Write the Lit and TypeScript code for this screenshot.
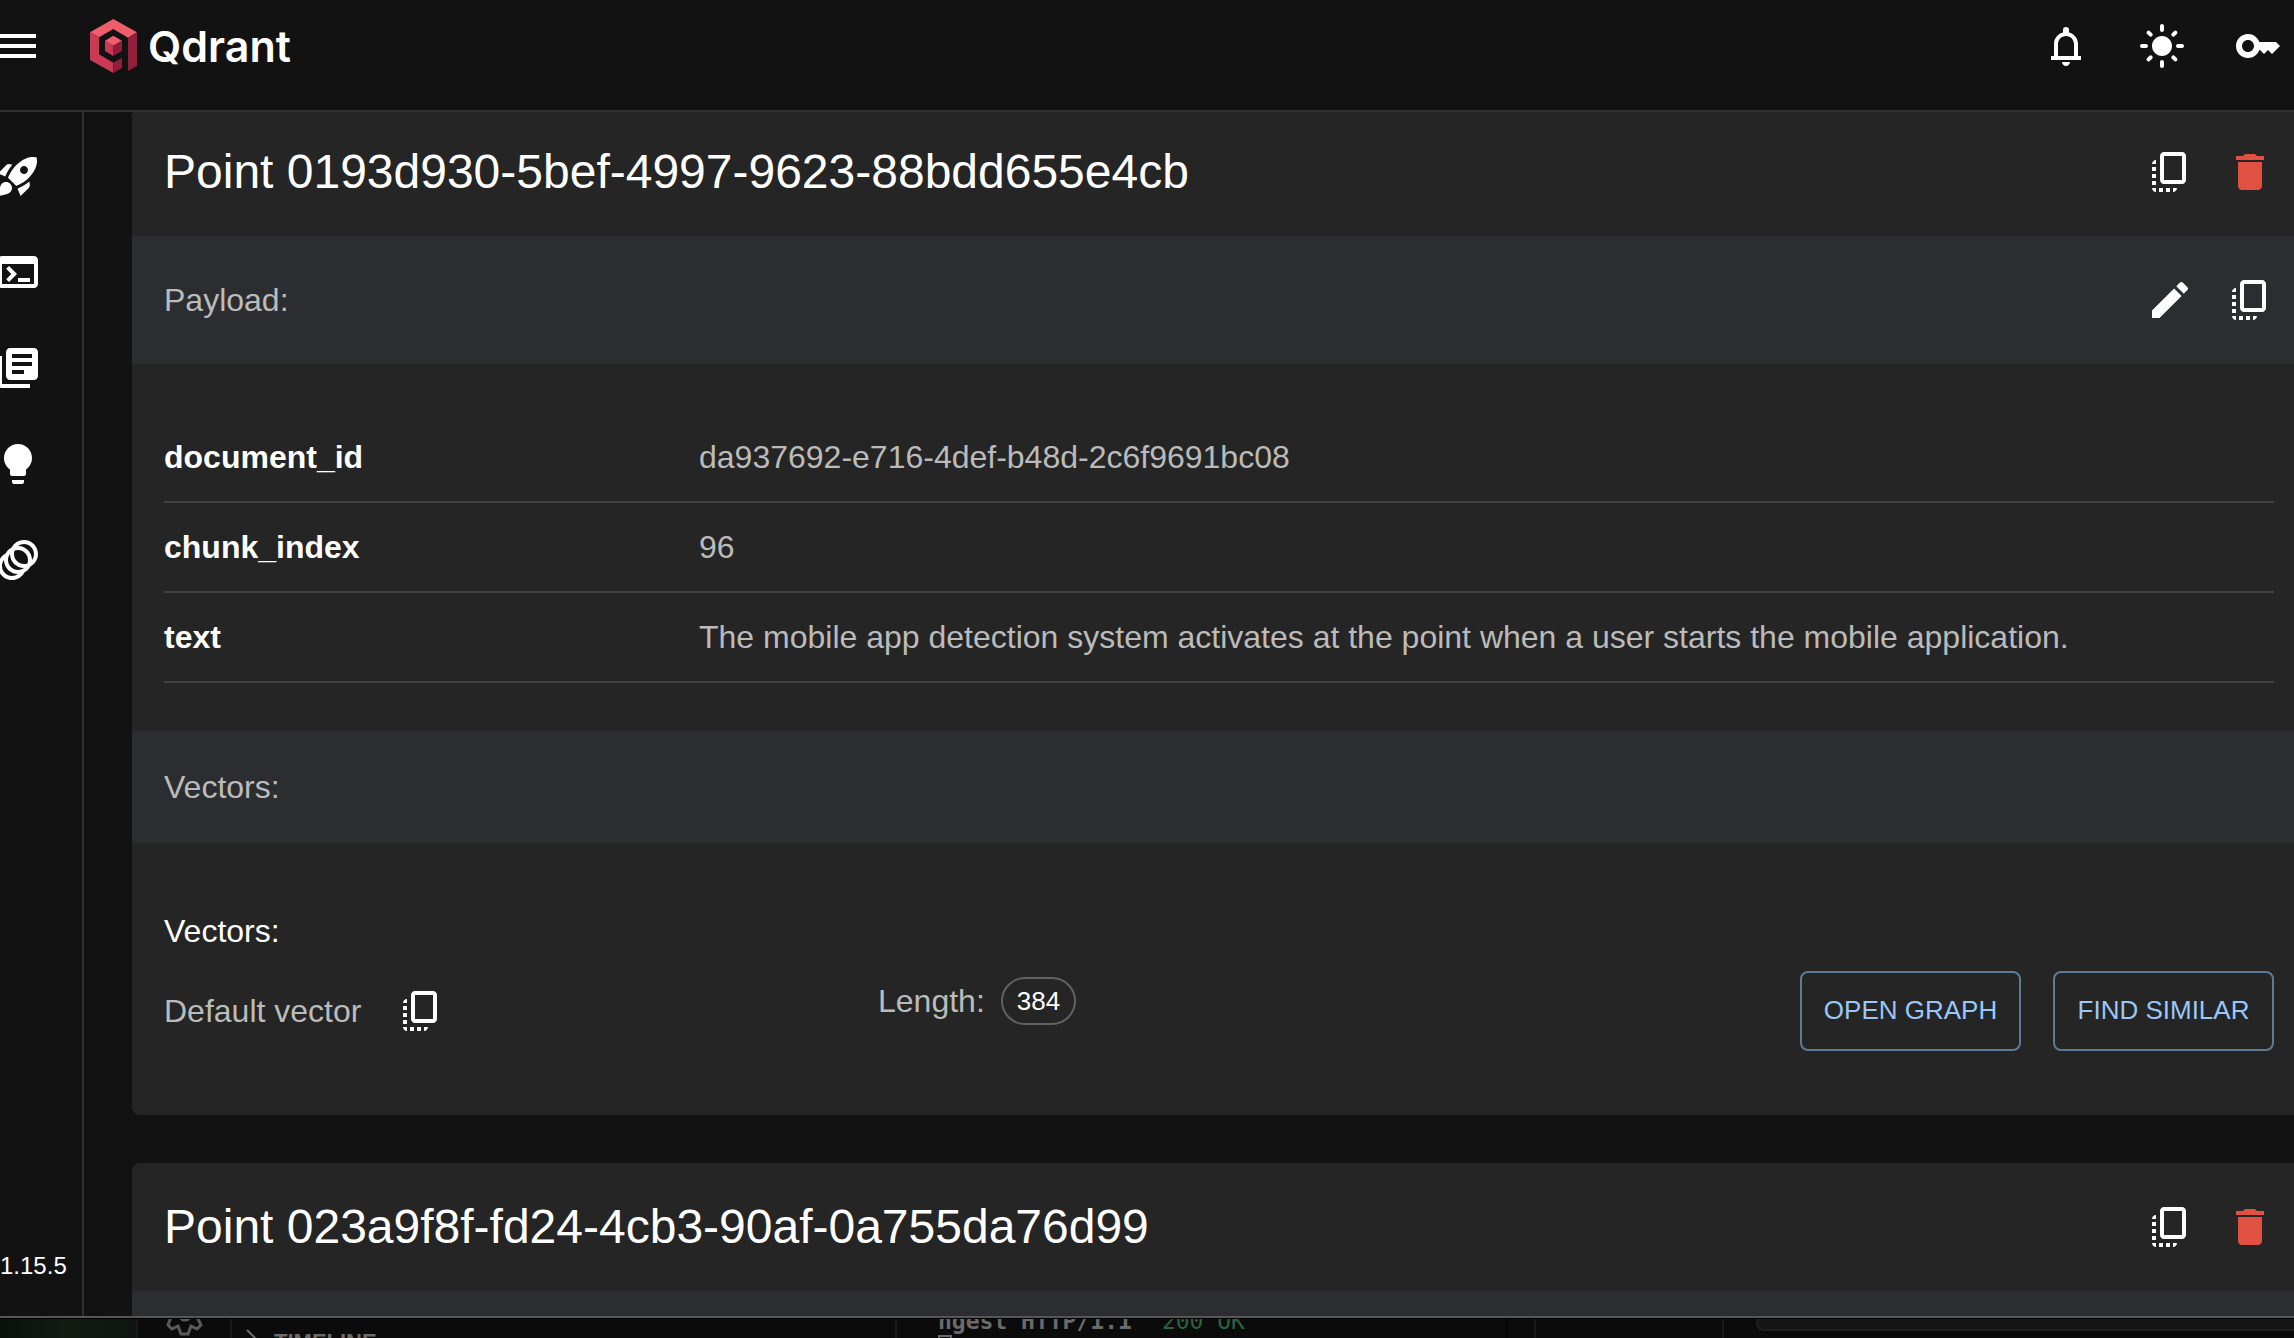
import { LitElement, html, css, svg, nothing } from "lit";
import { customElement, property } from "lit/decorators.js";

const ICONS: Record<string, string> = {
  menu: "M3 18h18v-2H3v2zm0-5h18v-2H3v2zm0-7v2h18V6H3z",
  rocket:
    "M9.19 6.35c-2.04 2.29-3.44 5.58-3.57 5.89L2 10.69l4.05-4.05c.47-.47 1.15-.68 1.81-.55l1.33.26zM11.17 17s3.74-1.55 5.89-3.7c5.4-5.4 4.5-9.62 4.21-10.57-.95-.3-5.17-1.19-10.57 4.21C8.55 9.09 7 12.83 7 12.83L11.17 17zm6.48-2.19c-2.29 2.04-5.58 3.44-5.89 3.57L13.31 22l4.05-4.05c.47-.47.68-1.15.55-1.81l-.26-1.33zM9 18c0 .83-.34 1.58-.88 2.12C6.94 21.3 2 22 2 22s.7-4.94 1.88-6.12C4.42 15.34 5.17 15 6 15c1.66 0 3 1.34 3 3zm4-9c0-1.1.9-2 2-2s2 .9 2 2-.9 2-2 2-2-.9-2-2z",
  terminal:
    "M20 4H4c-1.11 0-2 .9-2 2v12c0 1.1.89 2 2 2h16c1.1 0 2-.9 2-2V6c0-1.1-.89-2-2-2zm0 14H4V8h16v10zm-2-1h-6v-2h6v2zM7.5 17l-1.41-1.41L8.67 13l-2.59-2.59L7.5 9l4 4-4 4z",
  library:
    "M4 6H2v14c0 1.1.9 2 2 2h14v-2H4V6zm16-4H8c-1.1 0-2 .9-2 2v12c0 1.1.9 2 2 2h12c1.1 0 2-.9 2-2V4c0-1.1-.9-2-2-2zm-1 9H9V9h10v2zm-4 4H9v-2h6v2zm4-8H9V5h10v2z",
  bulb: "M9 21c0 .55.45 1 1 1h4c.55 0 1-.45 1-1v-1H9v1zm3-19C8.14 2 5 5.14 5 9c0 2.38 1.19 4.47 3 5.74V17c0 .55.45 1 1 1h6c.55 0 1-.45 1-1v-2.26c1.81-1.27 3-3.36 3-5.74 0-3.86-3.14-7-7-7z",
  rings:
    "M15 2c-2.71 0-5.05 1.54-6.22 3.78-1.28.67-2.34 1.72-3 3C3.54 9.95 2 12.29 2 15c0 3.87 3.13 7 7 7 2.71 0 5.05-1.54 6.22-3.78 1.28-.67 2.34-1.72 3-3C20.46 14.05 22 11.71 22 9c0-3.87-3.13-7-7-7zM9 20c-2.76 0-5-2.24-5-5 0-1.12.37-2.16 1-3 0 3.87 3.13 7 7 7-.84.63-1.88 1-3 1zm3-3c-2.76 0-5-2.24-5-5 0-1.12.37-2.16 1-3 0 3.86 3.13 6.99 7 7-.84.63-1.88 1-3 1zm4.7-3.3c-.53.19-1.1.3-1.7.3-2.76 0-5-2.24-5-5 0-.6.11-1.17.3-1.7.53-.19 1.1-.3 1.7-.3 2.76 0 5 2.24 5 5 0 .6-.11 1.17-.3 1.7zM19 12c0-3.86-3.13-6.99-7-7 .84-.63 1.87-1 3-1 2.76 0 5 2.24 5 5 0 1.12-.37 2.16-1 3z",
  bell: "M4.5 19v-2H6v-6c0-2.8 1.9-5.2 4.5-5.8V4a1.5 1.5 0 0 1 3 0v1.2C16.1 5.8 18 8.2 18 11v6h1.5v2zM8 17h8v-6c0-2.2-1.8-4-4-4s-4 1.8-4 4zM10 20h4c0 1.1-.9 2-2 2s-2-.9-2-2z",
  sun: "M12 7c-2.76 0-5 2.24-5 5s2.24 5 5 5 5-2.24 5-5-2.24-5-5-5zM2 13h2c.55 0 1-.45 1-1s-.45-1-1-1H2c-.55 0-1 .45-1 1s.45 1 1 1zm18 0h2c.55 0 1-.45 1-1s-.45-1-1-1h-2c-.55 0-1 .45-1 1s.45 1 1 1zM11 2v2c0 .55.45 1 1 1s1-.45 1-1V2c0-.55-.45-1-1-1s-1 .45-1 1zm0 18v2c0 .55.45 1 1 1s1-.45 1-1v-2c0-.55-.45-1-1-1s-1 .45-1 1zM5.99 4.58c-.39-.39-1.03-.39-1.41 0-.39.39-.39 1.03 0 1.41l1.06 1.06c.39.39 1.03.39 1.41 0s.39-1.03 0-1.41L5.99 4.58zm12.37 12.37c-.39-.39-1.03-.39-1.41 0-.39.39-.39 1.03 0 1.41l1.06 1.06c.39.39 1.03.39 1.41 0 .39-.39.39-1.03 0-1.41l-1.06-1.06zm1.06-10.96c.39-.39.39-1.03 0-1.41-.39-.39-1.03-.39-1.41 0l-1.06 1.06c-.39.39-.39 1.03 0 1.41s1.03.39 1.41 0l1.06-1.06zM7.05 18.36c.39-.39.39-1.03 0-1.41-.39-.39-1.03-.39-1.41 0l-1.06 1.06c-.39.39-.39 1.03 0 1.41s1.03.39 1.41 0l1.06-1.06z",
  key: "M21 10h-8.35C11.83 7.67 9.61 6 7 6c-3.31 0-6 2.69-6 6s2.69 6 6 6c2.61 0 4.83-1.67 5.65-4H13l2 2 2-2 2 2 4-4.04L21 10zM7 15c-1.65 0-3-1.35-3-3s1.35-3 3-3 3 1.35 3 3-1.35 3-3 3z",
  copy: "M18 2H9c-1.1 0-2 .9-2 2v12c0 1.1.9 2 2 2h9c1.1 0 2-.9 2-2V4c0-1.1-.9-2-2-2zm0 14H9V4h9v12zM3 15v-2h2v2H3zm0-5.5h2v2H3v-2zM10 20h2v2h-2v-2zm-7-1.5v-2h2v2H3zM5 22c-1.1 0-2-.9-2-2h2v2zm3.5 0h-2v-2h2v2zm5 0v-2h2c0 1.1-.9 2-2 2zM5 6v2H3c0-1.1.9-2 2-2z",
  trash: "M6 19c0 1.1.9 2 2 2h8c1.1 0 2-.9 2-2V7H6v12zM19 4h-3.5l-1-1h-5l-1 1H5v2h14V4z",
  edit: "M3 17.25V21h3.75L17.81 9.94l-3.75-3.75L3 17.25zM20.71 7.04c.39-.39.39-1.02 0-1.41l-2.34-2.34c-.39-.39-1.02-.39-1.41 0l-1.83 1.83 3.75 3.75 1.83-1.83z",
};

const icon = (name: string) => html`<svg
  class="icon"
  viewBox="0 0 24 24"
  width="48"
  height="48"
  fill="currentColor"
  aria-hidden="true"
>
  ${svg`<path d=${ICONS[name]}></path>`}
</svg>`;

const buttonReset = css`
  * {
    box-sizing: border-box;
  }
  button {
    font: inherit;
    color: inherit;
    background: none;
    border: 0;
    margin: 0;
    padding: 0;
    cursor: pointer;
  }
  .icon {
    display: block;
    flex: none;
  }
  .icon-button {
    display: flex;
    padding: 16px;
    color: #fff;
  }
`;

interface PointData {
  id: string;
  payload: [string, string][];
  vectorLength: number;
}

const POINTS: PointData[] = [
  {
    id: "0193d930-5bef-4997-9623-88bdd655e4cb",
    payload: [
      ["document_id", "da937692-e716-4def-b48d-2c6f9691bc08"],
      ["chunk_index", "96"],
      ["text", "The mobile app detection system activates at the point when a user starts the mobile application."],
    ],
    vectorLength: 384,
  },
  { id: "023a9f8f-fd24-4cb3-90af-0a755da76d99", payload: [], vectorLength: 384 },
];

@customElement("point-card")
export class PointCard extends LitElement {
  @property({ attribute: false }) point!: PointData;

  static styles = [
    buttonReset,
    css`
      :host {
        display: block;
        background: #252525;
        border-radius: 8px;
        overflow: hidden;
        flex: none;
      }
      .bar {
        display: flex;
        align-items: center;
        padding: 24px 16px 24px 32px;
      }
      .tinted {
        background: #2c2d31;
        color: #bbb;
      }
      .short {
        padding-block: 32px;
      }
      h2,
      h3,
      h4 {
        margin: 0;
        font-weight: 400;
        flex: 1;
      }
      h2 {
        font-size: 48px;
        line-height: 64px;
        color: #fff;
      }
      h3,
      h4 {
        font-size: 32px;
        line-height: 48px;
      }
      h4 {
        color: #fff;
      }
      .icon-button.danger {
        color: #e15141;
      }
      .body {
        padding: 48px 32px;
      }
      table {
        width: 100%;
        border-collapse: collapse;
        table-layout: fixed;
      }
      th,
      td {
        height: 90px;
        padding: 0;
        border-bottom: 2px solid #424242;
        text-align: left;
        font-size: 32px;
        line-height: 48px;
      }
      th {
        width: 535px;
        color: #fff;
        font-weight: 700;
      }
      td {
        color: #bbb;
      }
      .vectors {
        padding: 64px 32px;
      }
      .vector {
        display: grid;
        grid-template-columns: 1fr 1fr 1fr;
        gap: 32px;
        color: #bbb;
        font-size: 32px;
        line-height: 48px;
        align-items: center;
        margin-top: 16px;
      }
      .name,
      .length,
      .actions {
        display: flex;
        align-items: center;
      }
      .name {
        gap: 20px;
      }
      .length {
        align-self: start;
        gap: 16px;
        padding-top: 6px;
      }
      .chip {
        display: inline-flex;
        align-items: center;
        height: 48px;
        padding: 0 14px;
        border: 2px solid #616161;
        border-radius: 24px;
        font-size: 26px;
        color: #fff;
      }
      .actions {
        justify-content: flex-end;
        gap: 32px;
      }
      .outlined {
        min-width: 221px;
        height: 80px;
        flex: none;
        padding: 0 16px 2px;
        border: 2px solid #5f7a97;
        border-radius: 8px;
        color: #99c7f8;
        font-size: 26px;
        text-transform: uppercase;
        white-space: nowrap;
      }
    `,
  ];

  render() {
    const { id, payload, vectorLength } = this.point;
    return html`
      <header class="bar">
        <h2>Point ${id}</h2>
        <button class="icon-button" aria-label="Copy point">${icon("copy")}</button>
        <button class="icon-button danger" aria-label="Delete point">${icon("trash")}</button>
      </header>
      <div class="bar tinted">
        <h3>Payload:</h3>
        <button class="icon-button" aria-label="Edit payload">${icon("edit")}</button>
        <button class="icon-button" aria-label="Copy payload">${icon("copy")}</button>
      </div>
      ${payload.length
        ? html`
            <div class="body">
              <table>
                <tbody>
                  ${payload.map(([k, v]) => html`<tr><th scope="row">${k}</th><td>${v}</td></tr>`)}
                </tbody>
              </table>
            </div>
            <div class="bar tinted short"><h3>Vectors:</h3></div>
            <div class="vectors">
              <h4>Vectors:</h4>
              <div class="vector">
                <div class="name">
                  <span>Default vector</span>
                  <button class="icon-button" aria-label="Copy vector">${icon("copy")}</button>
                </div>
                <div class="length"><span>Length:</span><span class="chip">${vectorLength}</span></div>
                <div class="actions">
                  <button class="outlined">Open graph</button>
                  <button class="outlined">Find similar</button>
                </div>
              </div>
            </div>
          `
        : nothing}
    `;
  }
}

const NAV = [
  ["rocket", "Welcome"],
  ["terminal", "Console"],
  ["library", "Collections"],
  ["bulb", "Tutorial"],
  ["rings", "Datasets"],
];

@customElement("app-root")
export class AppRoot extends LitElement {
  static styles = [
    buttonReset,
    css`
      :host {
        display: grid;
        grid-template-rows: minmax(0, 1fr) 20px;
        height: 100vh;
        overflow: hidden;
        background: #0b0b0b;
        color: #fff;
        font-family: "Liberation Sans", Helvetica, Arial, sans-serif;
      }
      /* The window hangs slightly over both screen edges. */
      .window {
        display: grid;
        grid-template-rows: 112px minmax(0, 1fr);
        margin: 0 -12px 0 -6px;
        background: #121212;
        border-bottom: 2px solid #545657;
        min-height: 0;
      }
      .top {
        display: flex;
        align-items: center;
        padding: 0 24px 18px 0;
        border-bottom: 2px solid #2f2f2f;
      }
      .menu {
        margin-right: 48px;
      }
      .logo {
        display: flex;
        align-items: center;
        gap: 11px;
        color: #fff;
        text-decoration: none;
        font-family: Inter, "Liberation Sans", sans-serif;
        font-size: 43px;
        font-weight: 600;
        line-height: 54px;
      }
      .tools {
        display: flex;
        gap: 48px;
        margin-left: auto;
      }
      .main {
        display: grid;
        grid-template-columns: 90px minmax(0, 1fr);
        min-height: 0;
      }
      .side {
        display: flex;
        flex-direction: column;
        padding-top: 16px;
        border-right: 2px solid #2f2f2f;
      }
      .side a {
        display: flex;
        padding: 24px 0;
        color: #fff;
      }
      .version {
        margin-top: auto;
        padding: 0 0 34px 6px;
        font-size: 24px;
        line-height: 32px;
      }
      .points {
        display: flex;
        flex-direction: column;
        gap: 48px;
        min-height: 0;
        overflow: hidden;
        padding-left: 48px;
      }
      .points > :first-child {
        margin-top: -4px;
      }
      .behind {
        display: flex;
        overflow: hidden;
        border-top: 1px solid #000;
        white-space: nowrap;
        color: #6b6b6b;
      }
      .behind > * {
        flex: none;
      }
      .wallpaper {
        width: 136px;
        background: linear-gradient(90deg, #0a110c, #131b13 50%, #0e130e);
      }
      .activity {
        width: 96px;
        padding-left: 28px;
        border: solid #1b1b1b;
        border-width: 0 2px;
      }
      .explorer {
        display: flex;
        gap: 16px;
        width: 665px;
        padding: 10px 0 0 14px;
        border-right: 2px solid #1b1b1b;
        font-size: 22px;
        font-weight: 700;
        line-height: 26px;
      }
      .shell {
        display: flex;
        flex-direction: column;
        width: 610px;
        margin-top: -12px;
        padding-left: 41px;
        border-right: 1px solid #000;
        font-family: "DejaVu Sans Mono", "Liberation Mono", monospace;
        font-size: 23px;
        line-height: 28px;
      }
      .line {
        display: flex;
        gap: 30px;
        font-weight: 700;
      }
      .ok {
        color: #2a6340;
        font-weight: 400;
      }
      .cursor {
        width: 14px;
        height: 24px;
        flex: none;
        border: 2px solid #6b6b6b;
      }
      .ruler {
        width: 29px;
        border-right: 2px solid #1b1b1b;
      }
      .gutter {
        width: 188px;
        border-right: 2px solid #1b1b1b;
      }
      .behind > .panel {
        flex: 1;
        height: 12px;
        margin-left: 32px;
        background: #161616;
        border: solid #1f1f1f;
        border-width: 0 0 2px 2px;
        border-bottom-left-radius: 8px;
      }
    `,
  ];

  render() {
    return html`
      <div class="window">
        <header class="top">
          <button class="menu" aria-label="Menu">${icon("menu")}</button>
          <a class="logo" href="#">
            <svg viewBox="270 57 141 162" width="47" height="54" aria-hidden="true">
              <path fill="#ee5e6c" d="M340 57l71 40-27 16-44-26-43 25-27-15z" />
              <path fill="#cb3a54" d="M270 97l27 15v51l43 25v31l-70-39z" />
              <path fill="#901f3c" d="M384 113l27-16v101l-27 15zM340 188l26-15v31l-26 15z" />
              <path fill="#ee5e6c" d="M340 107l26 15-26 15-25-15z" />
              <path fill="#cb3a54" d="M315 122l25 15v31l-25-15z" />
              <path fill="#901f3c" d="M366 122v31l-26 15v-31z" />
            </svg>
            <span>Qdrant</span>
          </a>
          <div class="tools">
            <button aria-label="Notifications">${icon("bell")}</button>
            <button aria-label="Switch theme">${icon("sun")}</button>
            <button aria-label="API key">${icon("key")}</button>
          </div>
        </header>
        <div class="main">
          <nav class="side">
            ${NAV.map(([name, label]) => html`<a href="#" aria-label=${label}>${icon(name)}</a>`)}
            <span class="version">1.15.5</span>
          </nav>
          <main class="points">
            ${POINTS.map((p) => html`<point-card .point=${p}></point-card>`)}
          </main>
        </div>
      </div>
      <div class="behind">
        <div class="wallpaper"></div>
        <div class="activity">
          <svg width="38" height="19" viewBox="0 0 38 19" fill="none" stroke="#5a5a5a" stroke-width="3" aria-hidden="true">
            <path d="M5 -2L2 6l4 4 6-3 3 8h7l3-8 6 3 4-4-4-8M14-3a5 4 0 0 0 10 0" />
          </svg>
        </div>
        <div class="explorer">
          <svg width="12" height="20" viewBox="0 0 12 20" fill="none" stroke="#6b6b6b" stroke-width="2" aria-hidden="true">
            <path d="M1 1l9 9-9 9" />
          </svg>
          <span>TIMELINE</span>
        </div>
        <div class="shell">
          <div class="line"><span>ngest HTTP/1.1</span><span class="ok">200 OK</span></div>
          <div class="cursor"></div>
        </div>
        <div class="ruler"></div>
        <div class="gutter"></div>
        <div class="panel"></div>
      </div>
    `;
  }
}
